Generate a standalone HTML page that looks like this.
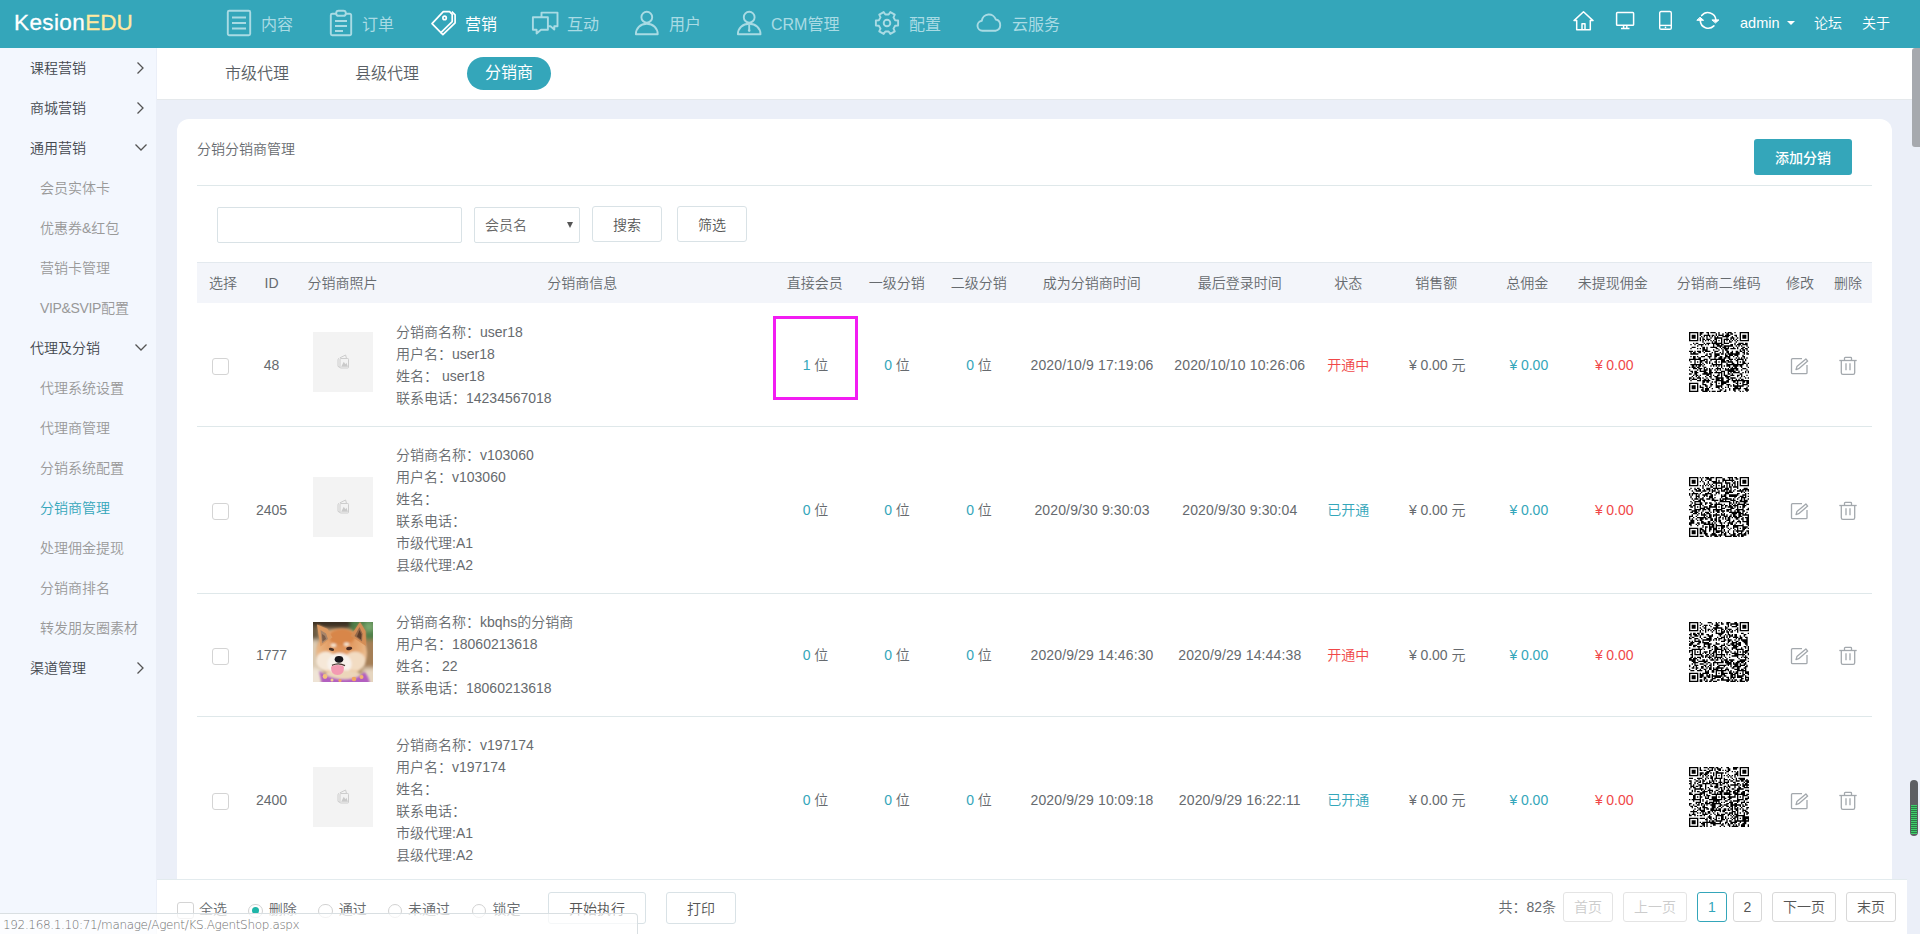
<!DOCTYPE html>
<html lang="zh-CN">
<head>
<meta charset="utf-8">
<title>KesionEDU</title>
<style>
*{box-sizing:border-box;margin:0;padding:0}
html,body{width:1920px;height:934px;overflow:hidden}
body{position:relative;background:#ebeff8;font-family:"Liberation Sans","Noto Sans CJK SC",sans-serif;font-size:14px;color:#666a6e;font-weight:350}
.abs{position:absolute}
/* header */
#hd{position:absolute;left:0;top:0;width:1920px;height:48px;background:#34a6ba}
#logo{position:absolute;left:14px;top:7.500px;font-size:22.500px;line-height:30px;color:#fff;letter-spacing:.4px;-webkit-text-stroke:.3px currentColor}
#logo b{font-weight:normal;color:#ffe9a0;letter-spacing:0}
.nav{position:absolute;top:0;height:48px;line-height:49px;font-size:16px;font-weight:400;color:#a9dbe4;white-space:nowrap}
.nav.on{color:#fff}
.nav svg{position:absolute;top:0;left:0;overflow:visible}
.nav span{position:absolute;top:0}
.tr{position:absolute;top:0;height:48px;line-height:46px;font-size:14px;color:#fff;white-space:nowrap}
/* sidebar */
#sb{position:absolute;left:0;top:48px;width:156px;height:886px;background:#f3f7fe}
.m1{position:absolute;left:30px;font-size:14px;line-height:20px;color:#43484e;white-space:nowrap}
.m2{position:absolute;left:40px;font-size:14px;line-height:20px;color:#999;white-space:nowrap}
.m2.on{color:#34a6ba}
.arr{position:absolute;left:133px;width:14px;height:14px}
/* tabs */
#tabs{position:absolute;left:157px;top:48px;width:1763px;height:52px;background:#fff;border-bottom:1px solid #e5e9ec}
.tab{position:absolute;top:15px;font-size:16px;line-height:22px;color:#5a5f65;white-space:nowrap}
#tabon{position:absolute;left:310px;top:9px;width:84px;height:33px;border-radius:17px;background:#34a6ba;color:#fff;font-size:16px;line-height:32px;text-align:center;font-weight:400}
/* card */
#card{position:absolute;left:177px;top:119px;width:1715px;height:820px;background:#fff;border-radius:12px 12px 0 0}
#ttl{position:absolute;left:20px;top:20px;font-size:14px;line-height:20px;color:#666a6e}
#addbtn{position:absolute;left:1577px;top:20px;width:98px;height:36px;border-radius:3px;background:#34a6ba;color:#fff;font-size:14px;line-height:38px;text-align:center;font-weight:500}
.hl{position:absolute;left:20px;width:1675px;height:1px;background:#dfe8ea}
.inp{position:absolute;border:1px solid #d9e2e6;background:#fff;border-radius:2px}
.btn{position:absolute;border:1px solid #d9e2e6;background:#fff;border-radius:3px;color:#555;font-size:14px;text-align:center;white-space:nowrap}
#th{position:absolute;left:20px;top:143px;width:1675px;height:41px;background:#f3f5fa;border-top:1px solid #e3e9ee}
.c{position:absolute;transform:translate(-50%,-50%);white-space:nowrap;font-size:14px;line-height:20px;color:#666a6e}
.c i{font-style:normal;color:#34a6ba}
.dt{letter-spacing:.13px}
.y{margin-right:3.5px}
.teal{color:#34a6ba}.red{color:#f04848}
.info{position:absolute;left:219px;font-size:14px;line-height:22px;color:#666a6e;white-space:nowrap}
.cb{position:absolute;width:17px;height:17px;border:1px solid #d4d4d4;border-radius:3px;background:#fff}
.ph{position:absolute;left:136px;width:60px;height:60px;background:#f3f3f3}
.qr{position:absolute;left:1512px;width:60px;height:60px}
.ic{position:absolute;width:22px;height:22px}
/* bottom */
#bot{position:absolute;left:157px;top:879px;width:1750px;height:55px;background:#fff;border-top:1px solid #e3ebee}
.rd{position:absolute;width:14.500px;height:14.500px;border:1px solid #d2d2d2;border-radius:50%;background:#fff}
.lb{position:absolute;font-size:14px;line-height:20px;color:#666a6e;white-space:nowrap}
#status{position:absolute;left:0;top:913px;width:638px;height:22px;background:rgba(255,255,255,.72);border-top:1px solid #d9dfe2;border-right:1px solid #d9dfe2;border-top-right-radius:4px;font-size:12px;line-height:23px;color:#707070;padding-left:3px;font-family:"DejaVu Sans","Liberation Sans",sans-serif;letter-spacing:-.34px}
</style>
</head>
<body>
<div id="hd">
<div id="logo">Kesion<b>EDU</b></div>
<div class="nav" style="left:227px"><svg width="24" height="48" viewBox="0 0 24 48" fill="none" stroke="currentColor" stroke-width="1.9"><rect x="0.8" y="10.8" width="22.4" height="24.4" rx="1.5"/><path d="M5 17.5h14M5 23h14M5 28.5h14"/></svg><span style="left:34px">内容</span></div>
<div class="nav" style="left:330px"><svg width="22" height="48" viewBox="0 0 22 48" fill="none" stroke="currentColor" stroke-width="1.9"><path d="M6 13.8H2.3a1.5 1.5 0 0 0-1.5 1.5v18.4a1.5 1.5 0 0 0 1.5 1.5h17.4a1.5 1.5 0 0 0 1.5-1.5V15.3a1.5 1.5 0 0 0-1.5-1.5H16"/><rect x="6.2" y="10.8" width="9.6" height="5" rx="2.4"/><path d="M5 21h12M5 26h12M5 31h8"/></svg><span style="left:32px">订单</span></div>
<div class="nav on" style="left:431px"><svg width="26" height="48" viewBox="0 0 26 48" fill="none" stroke="currentColor" stroke-width="1.700" stroke-linejoin="round"><path d="M1 23.700L12.300 11.600H18.600l2.600 2.800v7.200L9.900 32.700z"/><circle cx="13.600" cy="17.900" r="1.700"/><path d="M20.800 11.600l3.300 3.300v8L11.900 34.700 9.900 32.700"/></svg><span style="left:34px">营销</span></div>
<div class="nav" style="left:532px"><svg width="26" height="48" viewBox="0 0 26 48" fill="none" stroke="currentColor" stroke-width="1.9" stroke-linejoin="round"><path d="M9.500 17V12.600h16v13.600h-3.200v3.400l-3.800-3.400H16"/><path d="M.9 17.200h15v12.600H9l-4.400 3.700v-3.700H.9z"/></svg><span style="left:35px">互动</span></div>
<div class="nav" style="left:635px"><svg width="24" height="48" viewBox="0 0 24 48" fill="none" stroke="currentColor" stroke-width="1.9" stroke-linejoin="round"><circle cx="11.8" cy="17.2" r="5.4"/><path d="M.9 34.2c0-6 4.5-10.4 10.9-10.4s10.900 4.400 10.900 10.400z"/></svg><span style="left:34px">用户</span></div>
<div class="nav" style="left:737px"><svg width="25" height="48" viewBox="0 0 25 48" fill="none" stroke="currentColor" stroke-width="1.9" stroke-linejoin="round"><circle cx="12.2" cy="17.2" r="5.4"/><path d="M.9 34.200c0-6 4.700-10.400 11.300-10.400s11.300 4.400 11.300 10.400z"/><path d="M12.200 24.500v5.500"/><circle cx="12.200" cy="30.600" r="1.300" fill="currentColor" stroke="none"/></svg><span style="left:34px">CRM管理</span></div>
<div class="nav" style="left:875px"><svg width="24" height="48" viewBox="0 0 24 48" fill="none" stroke="currentColor" stroke-width="1.9" stroke-linejoin="round"><path d="M20.13 20.20L23.11 20.44L23.11 25.56L20.13 25.80L18.49 28.64L19.77 31.34L15.33 33.90L13.64 31.44L10.36 31.44L8.67 33.90L4.23 31.34L5.51 28.64L3.87 25.80L0.89 25.56L0.89 20.44L3.87 20.20L5.51 17.36L4.23 14.66L8.67 12.10L10.36 14.56L13.64 14.56L15.33 12.10L19.77 14.66L18.49 17.36z"/><circle cx="12" cy="23" r="3.3"/></svg><span style="left:34px">配置</span></div>
<div class="nav" style="left:976px"><svg width="26" height="48" viewBox="0 0 26 48" fill="none" stroke="currentColor" stroke-width="1.9" stroke-linejoin="round"><path d="M6.400 30.700a5 5 0 0 1-.6-9.950 7.200 7.200 0 0 1 14-1.200A5.700 5.700 0 0 1 19.600 30.700z"/></svg><span style="left:36px">云服务</span></div>

<svg class="abs" style="left:1573px;top:10px" width="21" height="22" viewBox="0 0 21 22" fill="none" stroke="#fff" stroke-width="1.5" stroke-linejoin="round"><path d="M1 10.600L10.500 1.800 20 10.600h-2.700v9.200h-13.600v-9.200z"/><path d="M9 19.800v-6h3v6"/></svg>
<svg class="abs" style="left:1615px;top:11px" width="20" height="19" viewBox="0 0 20 19" fill="none" stroke="#fff" stroke-width="1.5" stroke-linejoin="round"><rect x="1.600" y="1.600" width="17" height="12.600" rx=".8"/><path d="M6 17.400h8.500M8.600 14.200v3M11.800 14.200v3"/></svg>
<svg class="abs" style="left:1658px;top:10px" width="15" height="21" viewBox="0 0 15 21" fill="none" stroke="#fff" stroke-width="1.400" stroke-linejoin="round"><rect x="1.700" y="1.500" width="11.600" height="17.800" rx="1.400"/><path d="M1.700 15.400h11.600"/><circle cx="7.500" cy="17.400" r=".8" fill="#fff" stroke="none"/></svg>
<svg class="abs" style="left:1696px;top:10px" width="24" height="22" viewBox="0 0 24 22" fill="none" stroke="#fff" stroke-width="1.600" stroke-linecap="round" stroke-linejoin="round"><path d="M5.700 5.600A8 8 0 0 1 19.900 10"/><path d="M16.300 9.900h6.600l-3.200 2.800z" fill="#fff" stroke-width="1"/><path d="M17.900 15.900A8 8 0 0 1 4.300 10.600"/><path d="M1.200 10.300h6.400L4.300 7.500z" fill="#fff" stroke-width="1"/></svg>
<div class="tr" style="left:1740px;font-size:14.500px">admin</div>
<div class="abs" style="left:1787px;top:21px;width:0;height:0;border-left:4px solid transparent;border-right:4px solid transparent;border-top:4.500px solid #fff"></div>
<div class="tr" style="left:1814px">论坛</div>
<div class="tr" style="left:1862px">关于</div>
</div>

<div id="sb">
<div class="m1" style="top:10px">课程营销</div>
<svg class="arr" style="top:13px" viewBox="0 0 14 14" fill="none" stroke="#555" stroke-width="1.3"><path d="M4.500 1.500L10 7l-5.500 5.500"/></svg>
<div class="m1" style="top:50px">商城营销</div>
<svg class="arr" style="top:53px" viewBox="0 0 14 14" fill="none" stroke="#555" stroke-width="1.3"><path d="M4.500 1.500L10 7l-5.500 5.500"/></svg>
<div class="m1" style="top:90px">通用营销</div>
<svg class="arr" style="top:92px;left:134px" viewBox="0 0 14 14" fill="none" stroke="#555" stroke-width="1.3"><path d="M1.500 4.500L7 10l5.500-5.500"/></svg>
<div class="m2" style="top:130px">会员实体卡</div>
<div class="m2" style="top:170px">优惠券&amp;红包</div>
<div class="m2" style="top:210px">营销卡管理</div>
<div class="m2" style="top:250px"><span style="letter-spacing:-.35px">VIP&amp;SVIP</span>配置</div>
<div class="m1" style="top:290px">代理及分销</div>
<svg class="arr" style="top:292px;left:134px" viewBox="0 0 14 14" fill="none" stroke="#555" stroke-width="1.3"><path d="M1.500 4.500L7 10l5.500-5.500"/></svg>
<div class="m2" style="top:330px">代理系统设置</div>
<div class="m2" style="top:370px">代理商管理</div>
<div class="m2" style="top:410px">分销系统配置</div>
<div class="m2 on" style="top:450px">分销商管理</div>
<div class="m2" style="top:490px">处理佣金提现</div>
<div class="m2" style="top:530px">分销商排名</div>
<div class="m2" style="top:570px">转发朋友圈素材</div>
<div class="m1" style="top:610px">渠道管理</div>
<svg class="arr" style="top:613px" viewBox="0 0 14 14" fill="none" stroke="#555" stroke-width="1.3"><path d="M4.500 1.500L10 7l-5.500 5.500"/></svg>
</div>
<div id="tabs">
<div class="tab" style="left:68px">市级代理</div>
<div class="tab" style="left:198px">县级代理</div>
<div id="tabon">分销商</div>
</div>
<div class="abs" style="left:1912px;top:48px;width:8px;height:99px;background:#a6a9ae;border-radius:3px 0 0 3px"></div>
<div id="card">
<div id="ttl">分销分销商管理</div>
<div id="addbtn">添加分销</div>
<div class="hl" style="top:66px"></div>
<div class="inp" style="left:40px;top:88px;width:245px;height:36px"></div>
<div class="inp" style="left:297px;top:88px;width:106px;height:36px;font-size:14px;line-height:34px;padding-left:10px;color:#666">会员名<span style="position:absolute;left:92px;top:14px;width:0;height:0;border-left:3.5px solid transparent;border-right:3.5px solid transparent;border-top:6px solid #555"></span></div>
<div class="btn" style="left:415px;top:87px;width:70px;height:36px;line-height:36px">搜索</div>
<div class="btn" style="left:500px;top:87px;width:70px;height:36px;line-height:36px">筛选</div>
<div id="th"></div>
<div class="c" style="left:46px;top:164px">选择</div>
<div class="c" style="left:94.5px;top:164px">ID</div>
<div class="c" style="left:165.5px;top:164px">分销商照片</div>
<div class="c" style="left:405.29999999999995px;top:164px">分销商信息</div>
<div class="c" style="left:637.7px;top:164px">直接会员</div>
<div class="c" style="left:719.8px;top:164px">一级分销</div>
<div class="c" style="left:801.8px;top:164px">二级分销</div>
<div class="c" style="left:914.7px;top:164px">成为分销商时间</div>
<div class="c" style="left:1062.7px;top:164px">最后登录时间</div>
<div class="c" style="left:1171.3px;top:164px">状态</div>
<div class="c" style="left:1259.2px;top:164px">销售额</div>
<div class="c" style="left:1350.3px;top:164px">总佣金</div>
<div class="c" style="left:1435.8px;top:164px">未提现佣金</div>
<div class="c" style="left:1541.7px;top:164px">分销商二维码</div>
<div class="c" style="left:1623px;top:164px">修改</div>
<div class="c" style="left:1671px;top:164px">删除</div>
<div class="hl" style="top:307px"></div>
<div class="cb" style="left:35px;top:239px"></div>
<div class="c" style="left:94.5px;top:246px">48</div>
<div class="ph" style="top:213px"><svg style="position:absolute;left:24px;top:22px" width="13" height="15" viewBox="0 0 13 15" fill="none" stroke="#cdcdcd" stroke-width="1"><path d="M3 3.8L8.600 1l.8 3"/><path d="M2.200 4.200L1 5.200v7.200l2 1"/><rect x="3" y="4.500" width="8.500" height="9.500" rx=".8"/><path d="M4.200 12.800l2.600-5 1.500 2.400 1.100-1.400 1.600 4z" fill="#cacaca" stroke="none"/></svg></div>
<div class="info" style="top:202px">分销商名称：user18<br>用户名：user18<br>姓名： user18<br>联系电话：14234567018</div>
<div class="c" style="left:638.5px;top:246px"><i>1</i> 位</div>
<div class="c" style="left:720px;top:246px"><i>0</i> 位</div>
<div class="c" style="left:802px;top:246px"><i>0</i> 位</div>
<div class="c dt" style="left:915px;top:246px">2020/10/9 17:19:06</div>
<div class="c dt" style="left:1062.8px;top:246px">2020/10/10 10:26:06</div>
<div class="c red" style="left:1171.3px;top:246px">开通中</div>
<div class="c" style="left:1260.3px;top:246px"><span class="y">¥</span>0.00 元</div>
<div class="c teal" style="left:1351.9px;top:246px"><span class="y">¥</span>0.00</div>
<div class="c red" style="left:1437.2px;top:246px"><span class="y">¥</span>0.00</div>
<svg class="qr" style="top:213px" viewBox="0 0 45 45" shape-rendering="auto"><rect width="45" height="45" fill="#fff"/><path fill="#000" d="M0 0h7v1h-7zM8 0h3v1h-3zM13 0h2v1h-2zM16 0h4v1h-4zM22 0h1v1h-1zM27 0h1v1h-1zM29 0h3v1h-3zM34 0h1v1h-1zM38 0h7v1h-7zM0 1h1v1h-1zM6 1h1v1h-1zM8 1h2v1h-2zM14 1h1v1h-1zM20 1h1v1h-1zM22 1h1v1h-1zM25 1h1v1h-1zM28 1h2v1h-2zM31 1h2v1h-2zM38 1h1v1h-1zM44 1h1v1h-1zM0 2h1v1h-1zM2 2h3v1h-3zM6 2h1v1h-1zM8 2h1v1h-1zM11 2h5v1h-5zM17 2h2v1h-2zM20 2h1v1h-1zM22 2h4v1h-4zM27 2h4v1h-4zM34 2h2v1h-2zM38 2h1v1h-1zM40 2h3v1h-3zM44 2h1v1h-1zM0 3h1v1h-1zM2 3h3v1h-3zM6 3h1v1h-1zM9 3h1v1h-1zM11 3h1v1h-1zM13 3h1v1h-1zM15 3h1v1h-1zM17 3h1v1h-1zM19 3h1v1h-1zM21 3h1v1h-1zM25 3h5v1h-5zM32 3h1v1h-1zM35 3h1v1h-1zM38 3h1v1h-1zM40 3h3v1h-3zM44 3h1v1h-1zM0 4h1v1h-1zM2 4h3v1h-3zM6 4h1v1h-1zM8 4h1v1h-1zM10 4h1v1h-1zM13 4h1v1h-1zM16 4h1v1h-1zM19 4h6v1h-6zM28 4h1v1h-1zM31 4h3v1h-3zM36 4h1v1h-1zM38 4h1v1h-1zM40 4h3v1h-3zM44 4h1v1h-1zM0 5h1v1h-1zM6 5h1v1h-1zM8 5h1v1h-1zM10 5h2v1h-2zM13 5h3v1h-3zM19 5h2v1h-2zM24 5h1v1h-1zM26 5h4v1h-4zM31 5h1v1h-1zM33 5h1v1h-1zM35 5h1v1h-1zM38 5h1v1h-1zM44 5h1v1h-1zM0 6h7v1h-7zM8 6h1v1h-1zM10 6h1v1h-1zM12 6h1v1h-1zM14 6h1v1h-1zM16 6h1v1h-1zM18 6h1v1h-1zM20 6h1v1h-1zM22 6h1v1h-1zM24 6h1v1h-1zM26 6h1v1h-1zM28 6h1v1h-1zM30 6h1v1h-1zM32 6h1v1h-1zM34 6h1v1h-1zM36 6h1v1h-1zM38 6h7v1h-7zM10 7h1v1h-1zM17 7h1v1h-1zM19 7h2v1h-2zM24 7h1v1h-1zM26 7h1v1h-1zM30 7h2v1h-2zM35 7h1v1h-1zM3 8h1v1h-1zM5 8h2v1h-2zM11 8h1v1h-1zM13 8h3v1h-3zM17 8h8v1h-8zM26 8h4v1h-4zM34 8h1v1h-1zM37 8h4v1h-4zM42 8h2v1h-2zM1 9h1v1h-1zM4 9h1v1h-1zM7 9h4v1h-4zM12 9h1v1h-1zM14 9h1v1h-1zM18 9h1v1h-1zM20 9h3v1h-3zM24 9h2v1h-2zM31 9h2v1h-2zM34 9h1v1h-1zM36 9h3v1h-3zM40 9h4v1h-4zM6 10h1v1h-1zM9 10h1v1h-1zM18 10h1v1h-1zM21 10h4v1h-4zM26 10h7v1h-7zM35 10h1v1h-1zM37 10h1v1h-1zM39 10h1v1h-1zM43 10h1v1h-1zM2 11h3v1h-3zM10 11h2v1h-2zM13 11h1v1h-1zM16 11h5v1h-5zM23 11h1v1h-1zM25 11h3v1h-3zM29 11h1v1h-1zM33 11h1v1h-1zM36 11h1v1h-1zM40 11h2v1h-2zM44 11h1v1h-1zM1 12h1v1h-1zM6 12h1v1h-1zM8 12h1v1h-1zM10 12h2v1h-2zM13 12h1v1h-1zM20 12h2v1h-2zM24 12h1v1h-1zM26 12h4v1h-4zM31 12h4v1h-4zM36 12h1v1h-1zM39 12h2v1h-2zM42 12h2v1h-2zM10 13h4v1h-4zM18 13h1v1h-1zM22 13h1v1h-1zM25 13h1v1h-1zM27 13h2v1h-2zM38 13h1v1h-1zM40 13h2v1h-2zM43 13h1v1h-1zM0 14h3v1h-3zM4 14h1v1h-1zM6 14h3v1h-3zM10 14h1v1h-1zM12 14h4v1h-4zM19 14h3v1h-3zM25 14h1v1h-1zM28 14h2v1h-2zM32 14h1v1h-1zM35 14h2v1h-2zM38 14h2v1h-2zM41 14h1v1h-1zM44 14h1v1h-1zM1 15h1v1h-1zM3 15h2v1h-2zM7 15h2v1h-2zM11 15h1v1h-1zM17 15h1v1h-1zM19 15h1v1h-1zM23 15h1v1h-1zM25 15h1v1h-1zM28 15h2v1h-2zM31 15h2v1h-2zM35 15h3v1h-3zM40 15h2v1h-2zM43 15h1v1h-1zM1 16h6v1h-6zM13 16h1v1h-1zM15 16h2v1h-2zM19 16h4v1h-4zM24 16h2v1h-2zM27 16h1v1h-1zM29 16h9v1h-9zM41 16h1v1h-1zM43 16h2v1h-2zM12 17h2v1h-2zM16 17h1v1h-1zM19 17h4v1h-4zM27 17h2v1h-2zM30 17h3v1h-3zM34 17h3v1h-3zM40 17h1v1h-1zM1 18h1v1h-1zM3 18h2v1h-2zM6 18h1v1h-1zM9 18h3v1h-3zM14 18h3v1h-3zM19 18h2v1h-2zM23 18h2v1h-2zM27 18h4v1h-4zM33 18h1v1h-1zM36 18h1v1h-1zM40 18h2v1h-2zM3 19h2v1h-2zM7 19h2v1h-2zM15 19h1v1h-1zM19 19h1v1h-1zM22 19h3v1h-3zM26 19h2v1h-2zM29 19h2v1h-2zM35 19h1v1h-1zM37 19h1v1h-1zM39 19h1v1h-1zM41 19h1v1h-1zM43 19h1v1h-1zM0 20h9v1h-9zM11 20h3v1h-3zM16 20h11v1h-11zM30 20h3v1h-3zM34 20h1v1h-1zM36 20h5v1h-5zM42 20h1v1h-1zM0 21h1v1h-1zM4 21h1v1h-1zM8 21h4v1h-4zM13 21h1v1h-1zM16 21h1v1h-1zM20 21h1v1h-1zM24 21h3v1h-3zM28 21h2v1h-2zM31 21h1v1h-1zM35 21h2v1h-2zM40 21h1v1h-1zM42 21h1v1h-1zM1 22h1v1h-1zM4 22h1v1h-1zM6 22h1v1h-1zM8 22h2v1h-2zM12 22h2v1h-2zM15 22h1v1h-1zM19 22h2v1h-2zM22 22h1v1h-1zM24 22h4v1h-4zM29 22h4v1h-4zM36 22h1v1h-1zM38 22h1v1h-1zM40 22h2v1h-2zM4 23h1v1h-1zM8 23h1v1h-1zM10 23h1v1h-1zM13 23h1v1h-1zM15 23h1v1h-1zM17 23h1v1h-1zM20 23h1v1h-1zM24 23h1v1h-1zM28 23h1v1h-1zM32 23h2v1h-2zM36 23h1v1h-1zM40 23h3v1h-3zM44 23h1v1h-1zM1 24h9v1h-9zM11 24h1v1h-1zM17 24h8v1h-8zM28 24h13v1h-13zM43 24h1v1h-1zM2 25h2v1h-2zM5 25h1v1h-1zM7 25h2v1h-2zM10 25h1v1h-1zM16 25h1v1h-1zM18 25h1v1h-1zM20 25h1v1h-1zM22 25h1v1h-1zM24 25h1v1h-1zM26 25h1v1h-1zM28 25h3v1h-3zM33 25h4v1h-4zM38 25h2v1h-2zM43 25h1v1h-1zM0 26h1v1h-1zM2 26h3v1h-3zM6 26h2v1h-2zM11 26h2v1h-2zM21 26h1v1h-1zM24 26h1v1h-1zM30 26h1v1h-1zM32 26h1v1h-1zM34 26h2v1h-2zM39 26h1v1h-1zM44 26h1v1h-1zM3 27h3v1h-3zM7 27h3v1h-3zM11 27h1v1h-1zM13 27h1v1h-1zM15 27h1v1h-1zM17 27h1v1h-1zM20 27h4v1h-4zM25 27h1v1h-1zM27 27h1v1h-1zM29 27h1v1h-1zM31 27h6v1h-6zM40 27h3v1h-3zM0 28h1v1h-1zM6 28h1v1h-1zM8 28h1v1h-1zM11 28h3v1h-3zM15 28h2v1h-2zM19 28h1v1h-1zM21 28h1v1h-1zM23 28h1v1h-1zM27 28h7v1h-7zM35 28h2v1h-2zM39 28h1v1h-1zM43 28h1v1h-1zM1 29h2v1h-2zM4 29h2v1h-2zM8 29h5v1h-5zM15 29h2v1h-2zM20 29h1v1h-1zM24 29h3v1h-3zM29 29h6v1h-6zM37 29h1v1h-1zM42 29h1v1h-1zM44 29h1v1h-1zM2 30h1v1h-1zM4 30h3v1h-3zM11 30h3v1h-3zM15 30h3v1h-3zM19 30h6v1h-6zM26 30h1v1h-1zM29 30h1v1h-1zM31 30h1v1h-1zM33 30h5v1h-5zM40 30h1v1h-1zM42 30h1v1h-1zM44 30h1v1h-1zM0 31h2v1h-2zM4 31h2v1h-2zM10 31h7v1h-7zM22 31h1v1h-1zM24 31h1v1h-1zM26 31h1v1h-1zM29 31h2v1h-2zM32 31h1v1h-1zM38 31h2v1h-2zM3 32h1v1h-1zM5 32h2v1h-2zM8 32h1v1h-1zM13 32h2v1h-2zM16 32h1v1h-1zM18 32h1v1h-1zM21 32h2v1h-2zM24 32h1v1h-1zM26 32h3v1h-3zM31 32h3v1h-3zM36 32h2v1h-2zM39 32h1v1h-1zM43 32h1v1h-1zM2 33h1v1h-1zM5 33h1v1h-1zM7 33h1v1h-1zM12 33h1v1h-1zM15 33h2v1h-2zM19 33h3v1h-3zM24 33h1v1h-1zM27 33h4v1h-4zM36 33h1v1h-1zM39 33h1v1h-1zM41 33h1v1h-1zM0 34h2v1h-2zM3 34h1v1h-1zM6 34h3v1h-3zM10 34h1v1h-1zM13 34h1v1h-1zM16 34h1v1h-1zM20 34h6v1h-6zM28 34h2v1h-2zM31 34h4v1h-4zM38 34h1v1h-1zM42 34h1v1h-1zM44 34h1v1h-1zM0 35h1v1h-1zM2 35h4v1h-4zM8 35h1v1h-1zM11 35h2v1h-2zM14 35h1v1h-1zM17 35h2v1h-2zM20 35h3v1h-3zM24 35h2v1h-2zM29 35h2v1h-2zM32 35h1v1h-1zM35 35h1v1h-1zM37 35h1v1h-1zM39 35h2v1h-2zM1 36h1v1h-1zM6 36h3v1h-3zM10 36h6v1h-6zM20 36h6v1h-6zM28 36h2v1h-2zM32 36h13v1h-13zM10 37h2v1h-2zM13 37h2v1h-2zM17 37h1v1h-1zM19 37h2v1h-2zM24 37h6v1h-6zM33 37h2v1h-2zM36 37h1v1h-1zM40 37h2v1h-2zM43 37h2v1h-2zM0 38h7v1h-7zM10 38h1v1h-1zM16 38h1v1h-1zM20 38h1v1h-1zM22 38h1v1h-1zM24 38h4v1h-4zM35 38h2v1h-2zM38 38h1v1h-1zM40 38h1v1h-1zM43 38h2v1h-2zM0 39h1v1h-1zM6 39h1v1h-1zM10 39h3v1h-3zM16 39h2v1h-2zM20 39h1v1h-1zM24 39h2v1h-2zM28 39h3v1h-3zM33 39h1v1h-1zM36 39h1v1h-1zM40 39h4v1h-4zM0 40h1v1h-1zM2 40h3v1h-3zM6 40h1v1h-1zM8 40h1v1h-1zM12 40h2v1h-2zM16 40h1v1h-1zM20 40h5v1h-5zM29 40h1v1h-1zM31 40h1v1h-1zM33 40h8v1h-8zM44 40h1v1h-1zM0 41h1v1h-1zM2 41h3v1h-3zM6 41h1v1h-1zM8 41h3v1h-3zM13 41h1v1h-1zM15 41h1v1h-1zM20 41h3v1h-3zM24 41h1v1h-1zM27 41h1v1h-1zM29 41h1v1h-1zM34 41h3v1h-3zM38 41h1v1h-1zM43 41h1v1h-1zM0 42h1v1h-1zM2 42h3v1h-3zM6 42h1v1h-1zM10 42h1v1h-1zM12 42h3v1h-3zM17 42h1v1h-1zM22 42h1v1h-1zM25 42h1v1h-1zM30 42h1v1h-1zM33 42h6v1h-6zM41 42h3v1h-3zM0 43h1v1h-1zM6 43h1v1h-1zM9 43h2v1h-2zM12 43h3v1h-3zM23 43h2v1h-2zM27 43h1v1h-1zM30 43h1v1h-1zM33 43h2v1h-2zM37 43h1v1h-1zM42 43h3v1h-3zM0 44h7v1h-7zM10 44h4v1h-4zM15 44h1v1h-1zM17 44h3v1h-3zM21 44h3v1h-3zM26 44h2v1h-2zM34 44h1v1h-1zM38 44h1v1h-1zM40 44h1v1h-1zM43 44h1v1h-1z"/></svg>
<svg class="ic" style="left:1611px;top:236px" viewBox="0 0 22 22" fill="none" stroke="#a3a8ad" stroke-width="1.300" stroke-linejoin="round"><path d="M14 3.700H4.500a1 1 0 0 0-1 1v13a1 1 0 0 0 1 1h13.500a1 1 0 0 0 1-1V10"/><path d="M8 14.600l.9-3 9-7.600 1.800 2.100-9 7.600z" /></svg>
<svg class="ic" style="left:1660px;top:236px" viewBox="0 0 22 22" fill="none" stroke="#a3a8ad" stroke-width="1.300" stroke-linejoin="round"><path d="M2.300 5.500h17.400"/><path d="M7.500 5.300V3.200a.8.800 0 0 1 .8-.8h5.400a.8.800 0 0 1 .8.800v2.100"/><path d="M4.300 5.700v12a1.600 1.600 0 0 0 1.600 1.600h10.200a1.600 1.600 0 0 0 1.600-1.600v-12"/><path d="M9 8.300v7M13 8.300v7"/></svg>
<div class="hl" style="top:474px"></div>
<div class="cb" style="left:35px;top:384px"></div>
<div class="c" style="left:94.5px;top:391px">2405</div>
<div class="ph" style="top:358px"><svg style="position:absolute;left:24px;top:22px" width="13" height="15" viewBox="0 0 13 15" fill="none" stroke="#cdcdcd" stroke-width="1"><path d="M3 3.8L8.600 1l.8 3"/><path d="M2.200 4.200L1 5.200v7.200l2 1"/><rect x="3" y="4.500" width="8.500" height="9.500" rx=".8"/><path d="M4.200 12.800l2.600-5 1.500 2.400 1.100-1.400 1.600 4z" fill="#cacaca" stroke="none"/></svg></div>
<div class="info" style="top:325px">分销商名称：v103060<br>用户名：v103060<br>姓名：<br>联系电话：<br>市级代理:A1<br>县级代理:A2</div>
<div class="c" style="left:638.5px;top:391px"><i>0</i> 位</div>
<div class="c" style="left:720px;top:391px"><i>0</i> 位</div>
<div class="c" style="left:802px;top:391px"><i>0</i> 位</div>
<div class="c dt" style="left:915px;top:391px">2020/9/30 9:30:03</div>
<div class="c dt" style="left:1062.8px;top:391px">2020/9/30 9:30:04</div>
<div class="c teal" style="left:1171.3px;top:391px">已开通</div>
<div class="c" style="left:1260.3px;top:391px"><span class="y">¥</span>0.00 元</div>
<div class="c teal" style="left:1351.9px;top:391px"><span class="y">¥</span>0.00</div>
<div class="c red" style="left:1437.2px;top:391px"><span class="y">¥</span>0.00</div>
<svg class="qr" style="top:358px" viewBox="0 0 45 45" shape-rendering="auto"><rect width="45" height="45" fill="#fff"/><path fill="#000" d="M0 0h7v1h-7zM8 0h1v1h-1zM10 0h1v1h-1zM12 0h3v1h-3zM16 0h3v1h-3zM20 0h5v1h-5zM29 0h4v1h-4zM34 0h2v1h-2zM38 0h7v1h-7zM0 1h1v1h-1zM6 1h1v1h-1zM9 1h1v1h-1zM13 1h4v1h-4zM20 1h1v1h-1zM25 1h2v1h-2zM30 1h1v1h-1zM32 1h1v1h-1zM35 1h2v1h-2zM38 1h1v1h-1zM44 1h1v1h-1zM0 2h1v1h-1zM2 2h3v1h-3zM6 2h1v1h-1zM9 2h1v1h-1zM12 2h1v1h-1zM15 2h2v1h-2zM20 2h1v1h-1zM22 2h1v1h-1zM25 2h9v1h-9zM38 2h1v1h-1zM40 2h3v1h-3zM44 2h1v1h-1zM0 3h1v1h-1zM2 3h3v1h-3zM6 3h1v1h-1zM8 3h1v1h-1zM10 3h1v1h-1zM14 3h1v1h-1zM17 3h4v1h-4zM22 3h1v1h-1zM25 3h1v1h-1zM27 3h1v1h-1zM32 3h1v1h-1zM34 3h1v1h-1zM36 3h1v1h-1zM38 3h1v1h-1zM40 3h3v1h-3zM44 3h1v1h-1zM0 4h1v1h-1zM2 4h3v1h-3zM6 4h1v1h-1zM11 4h1v1h-1zM14 4h1v1h-1zM18 4h7v1h-7zM27 4h4v1h-4zM33 4h2v1h-2zM36 4h1v1h-1zM38 4h1v1h-1zM40 4h3v1h-3zM44 4h1v1h-1zM0 5h1v1h-1zM6 5h1v1h-1zM11 5h1v1h-1zM13 5h1v1h-1zM15 5h1v1h-1zM17 5h1v1h-1zM20 5h1v1h-1zM24 5h1v1h-1zM28 5h1v1h-1zM30 5h1v1h-1zM32 5h1v1h-1zM34 5h1v1h-1zM36 5h1v1h-1zM38 5h1v1h-1zM44 5h1v1h-1zM0 6h7v1h-7zM8 6h1v1h-1zM10 6h1v1h-1zM12 6h1v1h-1zM14 6h1v1h-1zM16 6h1v1h-1zM18 6h1v1h-1zM20 6h1v1h-1zM22 6h1v1h-1zM24 6h1v1h-1zM26 6h1v1h-1zM28 6h1v1h-1zM30 6h1v1h-1zM32 6h1v1h-1zM34 6h1v1h-1zM36 6h1v1h-1zM38 6h7v1h-7zM10 7h1v1h-1zM16 7h2v1h-2zM20 7h1v1h-1zM24 7h3v1h-3zM28 7h1v1h-1zM30 7h2v1h-2zM33 7h4v1h-4zM1 8h1v1h-1zM4 8h1v1h-1zM6 8h2v1h-2zM10 8h1v1h-1zM13 8h3v1h-3zM18 8h7v1h-7zM27 8h3v1h-3zM31 8h1v1h-1zM36 8h1v1h-1zM41 8h3v1h-3zM0 9h1v1h-1zM4 9h2v1h-2zM7 9h2v1h-2zM11 9h1v1h-1zM13 9h3v1h-3zM17 9h1v1h-1zM19 9h1v1h-1zM21 9h1v1h-1zM24 9h1v1h-1zM26 9h4v1h-4zM31 9h1v1h-1zM34 9h1v1h-1zM38 9h1v1h-1zM40 9h5v1h-5zM2 10h1v1h-1zM5 10h4v1h-4zM10 10h3v1h-3zM15 10h1v1h-1zM17 10h3v1h-3zM22 10h1v1h-1zM24 10h3v1h-3zM28 10h1v1h-1zM30 10h2v1h-2zM33 10h1v1h-1zM36 10h5v1h-5zM42 10h1v1h-1zM44 10h1v1h-1zM3 11h1v1h-1zM9 11h1v1h-1zM14 11h1v1h-1zM17 11h1v1h-1zM20 11h3v1h-3zM27 11h6v1h-6zM39 11h1v1h-1zM41 11h1v1h-1zM0 12h1v1h-1zM2 12h5v1h-5zM8 12h1v1h-1zM12 12h5v1h-5zM20 12h1v1h-1zM22 12h1v1h-1zM27 12h3v1h-3zM36 12h2v1h-2zM42 12h1v1h-1zM44 12h1v1h-1zM0 13h1v1h-1zM2 13h1v1h-1zM5 13h1v1h-1zM7 13h1v1h-1zM10 13h4v1h-4zM16 13h2v1h-2zM19 13h1v1h-1zM24 13h1v1h-1zM26 13h2v1h-2zM30 13h7v1h-7zM40 13h3v1h-3zM1 14h1v1h-1zM5 14h3v1h-3zM11 14h1v1h-1zM13 14h1v1h-1zM15 14h3v1h-3zM24 14h4v1h-4zM30 14h6v1h-6zM38 14h3v1h-3zM42 14h1v1h-1zM44 14h1v1h-1zM1 15h1v1h-1zM5 15h1v1h-1zM7 15h1v1h-1zM10 15h1v1h-1zM15 15h3v1h-3zM19 15h1v1h-1zM24 15h1v1h-1zM27 15h2v1h-2zM34 15h1v1h-1zM37 15h1v1h-1zM39 15h4v1h-4zM2 16h1v1h-1zM4 16h3v1h-3zM8 16h3v1h-3zM13 16h3v1h-3zM17 16h2v1h-2zM23 16h1v1h-1zM25 16h7v1h-7zM33 16h1v1h-1zM36 16h1v1h-1zM39 16h1v1h-1zM41 16h1v1h-1zM44 16h1v1h-1zM3 17h1v1h-1zM7 17h2v1h-2zM10 17h2v1h-2zM17 17h5v1h-5zM23 17h3v1h-3zM27 17h1v1h-1zM31 17h4v1h-4zM38 17h2v1h-2zM41 17h3v1h-3zM1 18h1v1h-1zM4 18h5v1h-5zM11 18h1v1h-1zM19 18h1v1h-1zM23 18h8v1h-8zM33 18h1v1h-1zM35 18h2v1h-2zM38 18h6v1h-6zM2 19h1v1h-1zM4 19h1v1h-1zM8 19h2v1h-2zM12 19h2v1h-2zM15 19h2v1h-2zM20 19h1v1h-1zM22 19h1v1h-1zM30 19h2v1h-2zM33 19h1v1h-1zM35 19h1v1h-1zM37 19h1v1h-1zM41 19h2v1h-2zM1 20h1v1h-1zM4 20h6v1h-6zM12 20h1v1h-1zM16 20h2v1h-2zM19 20h6v1h-6zM26 20h1v1h-1zM30 20h1v1h-1zM32 20h1v1h-1zM34 20h1v1h-1zM36 20h6v1h-6zM43 20h2v1h-2zM0 21h2v1h-2zM3 21h2v1h-2zM8 21h1v1h-1zM10 21h1v1h-1zM15 21h2v1h-2zM19 21h2v1h-2zM24 21h2v1h-2zM27 21h2v1h-2zM30 21h2v1h-2zM33 21h4v1h-4zM40 21h3v1h-3zM1 22h2v1h-2zM4 22h1v1h-1zM6 22h1v1h-1zM8 22h1v1h-1zM11 22h3v1h-3zM15 22h6v1h-6zM22 22h1v1h-1zM24 22h1v1h-1zM27 22h1v1h-1zM29 22h4v1h-4zM34 22h1v1h-1zM36 22h1v1h-1zM38 22h1v1h-1zM40 22h2v1h-2zM4 23h1v1h-1zM8 23h4v1h-4zM13 23h3v1h-3zM20 23h1v1h-1zM24 23h3v1h-3zM31 23h3v1h-3zM36 23h1v1h-1zM40 23h1v1h-1zM44 23h1v1h-1zM0 24h2v1h-2zM4 24h5v1h-5zM10 24h3v1h-3zM14 24h2v1h-2zM18 24h7v1h-7zM28 24h4v1h-4zM35 24h6v1h-6zM43 24h2v1h-2zM2 25h4v1h-4zM7 25h1v1h-1zM10 25h1v1h-1zM15 25h1v1h-1zM18 25h1v1h-1zM20 25h3v1h-3zM24 25h3v1h-3zM28 25h2v1h-2zM31 25h1v1h-1zM34 25h1v1h-1zM36 25h2v1h-2zM40 25h2v1h-2zM1 26h2v1h-2zM4 26h3v1h-3zM9 26h1v1h-1zM12 26h3v1h-3zM16 26h1v1h-1zM18 26h1v1h-1zM21 26h2v1h-2zM25 26h1v1h-1zM30 26h9v1h-9zM40 26h1v1h-1zM43 26h1v1h-1zM3 27h3v1h-3zM7 27h1v1h-1zM9 27h1v1h-1zM11 27h1v1h-1zM13 27h3v1h-3zM20 27h1v1h-1zM24 27h1v1h-1zM26 27h1v1h-1zM32 27h4v1h-4zM37 27h4v1h-4zM42 27h1v1h-1zM2 28h1v1h-1zM6 28h1v1h-1zM9 28h4v1h-4zM15 28h2v1h-2zM18 28h5v1h-5zM24 28h3v1h-3zM28 28h1v1h-1zM31 28h1v1h-1zM33 28h2v1h-2zM37 28h2v1h-2zM40 28h5v1h-5zM0 29h3v1h-3zM5 29h1v1h-1zM11 29h1v1h-1zM13 29h1v1h-1zM15 29h2v1h-2zM18 29h1v1h-1zM20 29h1v1h-1zM23 29h1v1h-1zM26 29h3v1h-3zM30 29h2v1h-2zM33 29h3v1h-3zM37 29h3v1h-3zM44 29h1v1h-1zM0 30h1v1h-1zM3 30h1v1h-1zM6 30h7v1h-7zM14 30h3v1h-3zM20 30h1v1h-1zM22 30h2v1h-2zM25 30h1v1h-1zM27 30h1v1h-1zM29 30h2v1h-2zM32 30h1v1h-1zM34 30h4v1h-4zM40 30h1v1h-1zM42 30h3v1h-3zM0 31h1v1h-1zM2 31h1v1h-1zM5 31h1v1h-1zM8 31h3v1h-3zM12 31h2v1h-2zM16 31h2v1h-2zM19 31h2v1h-2zM22 31h1v1h-1zM25 31h1v1h-1zM27 31h1v1h-1zM29 31h2v1h-2zM35 31h2v1h-2zM39 31h2v1h-2zM43 31h2v1h-2zM1 32h3v1h-3zM6 32h1v1h-1zM8 32h2v1h-2zM16 32h2v1h-2zM19 32h2v1h-2zM22 32h2v1h-2zM28 32h3v1h-3zM33 32h1v1h-1zM37 32h1v1h-1zM40 32h1v1h-1zM43 32h2v1h-2zM1 33h3v1h-3zM9 33h2v1h-2zM14 33h2v1h-2zM18 33h1v1h-1zM20 33h1v1h-1zM22 33h2v1h-2zM27 33h1v1h-1zM30 33h1v1h-1zM32 33h2v1h-2zM36 33h3v1h-3zM40 33h5v1h-5zM0 34h4v1h-4zM6 34h2v1h-2zM9 34h4v1h-4zM14 34h2v1h-2zM17 34h1v1h-1zM19 34h1v1h-1zM23 34h2v1h-2zM26 34h1v1h-1zM29 34h4v1h-4zM35 34h1v1h-1zM38 34h1v1h-1zM43 34h2v1h-2zM0 35h2v1h-2zM5 35h1v1h-1zM7 35h1v1h-1zM11 35h8v1h-8zM20 35h1v1h-1zM24 35h1v1h-1zM29 35h1v1h-1zM31 35h2v1h-2zM34 35h1v1h-1zM40 35h1v1h-1zM43 35h2v1h-2zM1 36h1v1h-1zM6 36h1v1h-1zM10 36h1v1h-1zM15 36h1v1h-1zM17 36h2v1h-2zM20 36h7v1h-7zM28 36h2v1h-2zM33 36h8v1h-8zM44 36h1v1h-1zM10 37h1v1h-1zM12 37h2v1h-2zM15 37h4v1h-4zM20 37h1v1h-1zM24 37h3v1h-3zM28 37h1v1h-1zM33 37h4v1h-4zM40 37h4v1h-4zM0 38h7v1h-7zM8 38h2v1h-2zM12 38h1v1h-1zM15 38h2v1h-2zM18 38h3v1h-3zM22 38h1v1h-1zM24 38h2v1h-2zM29 38h1v1h-1zM31 38h1v1h-1zM33 38h1v1h-1zM36 38h1v1h-1zM38 38h1v1h-1zM40 38h3v1h-3zM44 38h1v1h-1zM0 39h1v1h-1zM6 39h1v1h-1zM8 39h3v1h-3zM12 39h1v1h-1zM15 39h2v1h-2zM18 39h3v1h-3zM24 39h1v1h-1zM26 39h1v1h-1zM30 39h1v1h-1zM34 39h1v1h-1zM36 39h1v1h-1zM40 39h2v1h-2zM0 40h1v1h-1zM2 40h3v1h-3zM6 40h1v1h-1zM8 40h1v1h-1zM10 40h3v1h-3zM15 40h1v1h-1zM18 40h1v1h-1zM20 40h5v1h-5zM26 40h1v1h-1zM29 40h1v1h-1zM33 40h1v1h-1zM35 40h6v1h-6zM43 40h2v1h-2zM0 41h1v1h-1zM2 41h3v1h-3zM6 41h1v1h-1zM8 41h2v1h-2zM11 41h2v1h-2zM18 41h1v1h-1zM20 41h3v1h-3zM24 41h2v1h-2zM27 41h1v1h-1zM29 41h1v1h-1zM33 41h1v1h-1zM36 41h1v1h-1zM39 41h1v1h-1zM42 41h1v1h-1zM44 41h1v1h-1zM0 42h1v1h-1zM2 42h3v1h-3zM6 42h1v1h-1zM8 42h2v1h-2zM11 42h3v1h-3zM17 42h3v1h-3zM24 42h1v1h-1zM26 42h2v1h-2zM30 42h1v1h-1zM33 42h2v1h-2zM37 42h3v1h-3zM41 42h2v1h-2zM44 42h1v1h-1zM0 43h1v1h-1zM6 43h1v1h-1zM12 43h2v1h-2zM16 43h5v1h-5zM22 43h3v1h-3zM26 43h2v1h-2zM31 43h4v1h-4zM36 43h2v1h-2zM39 43h4v1h-4zM0 44h7v1h-7zM8 44h3v1h-3zM13 44h2v1h-2zM16 44h1v1h-1zM19 44h3v1h-3zM23 44h1v1h-1zM27 44h5v1h-5zM33 44h3v1h-3zM37 44h1v1h-1zM39 44h2v1h-2z"/></svg>
<svg class="ic" style="left:1611px;top:381px" viewBox="0 0 22 22" fill="none" stroke="#a3a8ad" stroke-width="1.300" stroke-linejoin="round"><path d="M14 3.700H4.500a1 1 0 0 0-1 1v13a1 1 0 0 0 1 1h13.500a1 1 0 0 0 1-1V10"/><path d="M8 14.600l.9-3 9-7.600 1.800 2.100-9 7.600z" /></svg>
<svg class="ic" style="left:1660px;top:381px" viewBox="0 0 22 22" fill="none" stroke="#a3a8ad" stroke-width="1.300" stroke-linejoin="round"><path d="M2.300 5.500h17.400"/><path d="M7.500 5.300V3.200a.8.800 0 0 1 .8-.8h5.400a.8.800 0 0 1 .8.800v2.100"/><path d="M4.300 5.700v12a1.600 1.600 0 0 0 1.600 1.600h10.200a1.600 1.600 0 0 0 1.600-1.600v-12"/><path d="M9 8.300v7M13 8.300v7"/></svg>
<div class="hl" style="top:597px"></div>
<div class="cb" style="left:35px;top:529px"></div>
<div class="c" style="left:94.5px;top:536px">1777</div>
<svg class="ph" style="top:503px;background:#c9a98a" viewBox="0 0 60 60">
<defs>
<filter id="b1" x="-30%" y="-30%" width="160%" height="160%"><feGaussianBlur stdDeviation="2.2"/></filter>
<filter id="b2" x="-30%" y="-30%" width="160%" height="160%"><feGaussianBlur stdDeviation="1.1"/></filter>
<filter id="b3" x="-30%" y="-30%" width="160%" height="160%"><feGaussianBlur stdDeviation="0.55"/></filter>
<radialGradient id="hd1" cx="50%" cy="30%" r="75%"><stop offset="0" stop-color="#dc8a50"/><stop offset=".5" stop-color="#e6aa74"/><stop offset="1" stop-color="#f0d4b4"/></radialGradient>
<clipPath id="dc"><rect width="60" height="60"/></clipPath>
</defs>
<g clip-path="url(#dc)">
<rect width="60" height="60" fill="#b4946f"/>
<g filter="url(#b1)">
<rect x="-4" y="-4" width="48" height="10" fill="#3b2d20"/>
<rect x="-4" y="4" width="10" height="14" fill="#6b5a42"/>
<rect x="38" y="-6" width="28" height="24" fill="#4f7f48"/>
<circle cx="56" cy="5" r="5" fill="#7aa870"/>
<rect x="50" y="18" width="14" height="30" fill="#a57f56"/>
<rect x="-4" y="18" width="10" height="32" fill="#dccbb2"/>
<rect x="-4" y="46" width="14" height="18" fill="#efe4d6"/>
<rect x="50" y="46" width="14" height="18" fill="#e6d6c0"/>
</g>
<g filter="url(#b2)">
<path d="M4.500 2.500l10 4.500 5 8-11.500 9.500z" fill="#dc9a62"/>
<path d="M47 .5l5.500 9 .5 14.500-15-9.500z" fill="#d48e56"/>
<ellipse cx="28.500" cy="31" rx="25.500" ry="24.500" fill="url(#hd1)"/>
<ellipse cx="29" cy="15" rx="13" ry="8" fill="#d8864a"/>
<ellipse cx="13" cy="39" rx="10" ry="9.500" fill="#f6e8d8"/>
<ellipse cx="42" cy="39" rx="10.500" ry="9.500" fill="#f2dcc2"/>
<ellipse cx="26.500" cy="42" rx="12" ry="11" fill="#f8f2ec"/>
<ellipse cx="30" cy="55" rx="19" ry="7" fill="#ecd6ba"/>
<ellipse cx="20.500" cy="23.200" rx="2.800" ry="1.800" fill="#f7e8d4"/>
<ellipse cx="33.500" cy="22.200" rx="2.800" ry="1.800" fill="#f7e8d4"/>
<path d="M6 49q2 8 3 13h48q-1.500-8-5.500-12-6 6-16 7-15 2-29.500-8z" fill="#b25fc0"/>
</g>
<g filter="url(#b3)">
<path d="M4 2.500l10.500 4.500 5 8.500-12 9z" fill="#dc9a62"/><path d="M47 0l5.500 9 .5 15-15.500-10z" fill="#d48e56"/><path d="M7.500 8l5.500 3.500 2 5.500-6 4.500z" fill="#a88468"/>
<path d="M9 12l3 2 1 3-3.500 2.500z" fill="#7a5c48"/>
<path d="M46.500 5l3 6.500-.5 8-7.500-5.500z" fill="#94684a"/>
<path d="M46.500 8l2 4.500-.5 5-4-3z" fill="#5c3c2a"/>
<ellipse cx="18.500" cy="27.400" rx="2.700" ry="1.500" fill="#4a3026" transform="rotate(12 18.500 27.400)"/>
<ellipse cx="36.200" cy="26.500" rx="3" ry="1.700" fill="#4a2c22" transform="rotate(-8 36.200 26.500)"/>
<ellipse cx="26" cy="37.300" rx="4.300" ry="3.400" fill="#17121a"/>
<path d="M19 43.400q6.500-3 13 .2" stroke="#4a3430" stroke-width="1.300" fill="none"/>
<path d="M18 45.500q0-2.500 6.500-2.500t6.500 2.500q0 7.500-6.500 7.500t-6.500-7.500z" fill="#f39ab2"/>
<circle cx="12" cy="54.500" r="2.400" fill="#f2c27a"/><circle cx="41" cy="57" r="2.300" fill="#f0a860"/><circle cx="48.500" cy="55" r="2" fill="#f2b470"/><circle cx="27" cy="58.500" r="1.600" fill="#f0a860"/><circle cx="19" cy="58" r="1.500" fill="#f4cc90"/>
</g></g></svg>
<div class="info" style="top:492px">分销商名称：kbqhs的分销商<br>用户名：18060213618<br>姓名： 22<br>联系电话：18060213618</div>
<div class="c" style="left:638.5px;top:536px"><i>0</i> 位</div>
<div class="c" style="left:720px;top:536px"><i>0</i> 位</div>
<div class="c" style="left:802px;top:536px"><i>0</i> 位</div>
<div class="c dt" style="left:915px;top:536px">2020/9/29 14:46:30</div>
<div class="c dt" style="left:1062.8px;top:536px">2020/9/29 14:44:38</div>
<div class="c red" style="left:1171.3px;top:536px">开通中</div>
<div class="c" style="left:1260.3px;top:536px"><span class="y">¥</span>0.00 元</div>
<div class="c teal" style="left:1351.9px;top:536px"><span class="y">¥</span>0.00</div>
<div class="c red" style="left:1437.2px;top:536px"><span class="y">¥</span>0.00</div>
<svg class="qr" style="top:503px" viewBox="0 0 45 45" shape-rendering="auto"><rect width="45" height="45" fill="#fff"/><path fill="#000" d="M0 0h7v1h-7zM8 0h1v1h-1zM14 0h3v1h-3zM20 0h1v1h-1zM22 0h1v1h-1zM24 0h1v1h-1zM28 0h3v1h-3zM34 0h2v1h-2zM38 0h7v1h-7zM0 1h1v1h-1zM6 1h1v1h-1zM9 1h1v1h-1zM17 1h1v1h-1zM20 1h2v1h-2zM24 1h2v1h-2zM28 1h2v1h-2zM31 1h6v1h-6zM38 1h1v1h-1zM44 1h1v1h-1zM0 2h1v1h-1zM2 2h3v1h-3zM6 2h1v1h-1zM8 2h1v1h-1zM11 2h3v1h-3zM15 2h1v1h-1zM19 2h4v1h-4zM29 2h1v1h-1zM31 2h1v1h-1zM35 2h2v1h-2zM38 2h1v1h-1zM40 2h3v1h-3zM44 2h1v1h-1zM0 3h1v1h-1zM2 3h3v1h-3zM6 3h1v1h-1zM10 3h1v1h-1zM12 3h1v1h-1zM16 3h1v1h-1zM20 3h2v1h-2zM27 3h1v1h-1zM29 3h1v1h-1zM32 3h4v1h-4zM38 3h1v1h-1zM40 3h3v1h-3zM44 3h1v1h-1zM0 4h1v1h-1zM2 4h3v1h-3zM6 4h1v1h-1zM8 4h1v1h-1zM11 4h2v1h-2zM18 4h7v1h-7zM27 4h2v1h-2zM36 4h1v1h-1zM38 4h1v1h-1zM40 4h3v1h-3zM44 4h1v1h-1zM0 5h1v1h-1zM6 5h1v1h-1zM9 5h1v1h-1zM12 5h1v1h-1zM14 5h2v1h-2zM17 5h1v1h-1zM19 5h2v1h-2zM24 5h2v1h-2zM27 5h1v1h-1zM29 5h3v1h-3zM35 5h2v1h-2zM38 5h1v1h-1zM44 5h1v1h-1zM0 6h7v1h-7zM8 6h1v1h-1zM10 6h1v1h-1zM12 6h1v1h-1zM14 6h1v1h-1zM16 6h1v1h-1zM18 6h1v1h-1zM20 6h1v1h-1zM22 6h1v1h-1zM24 6h1v1h-1zM26 6h1v1h-1zM28 6h1v1h-1zM30 6h1v1h-1zM32 6h1v1h-1zM34 6h1v1h-1zM36 6h1v1h-1zM38 6h7v1h-7zM8 7h1v1h-1zM12 7h1v1h-1zM17 7h1v1h-1zM20 7h1v1h-1zM24 7h3v1h-3zM28 7h2v1h-2zM31 7h2v1h-2zM36 7h1v1h-1zM1 8h1v1h-1zM3 8h2v1h-2zM6 8h2v1h-2zM9 8h2v1h-2zM20 8h6v1h-6zM29 8h1v1h-1zM39 8h2v1h-2zM44 8h1v1h-1zM0 9h2v1h-2zM3 9h3v1h-3zM7 9h1v1h-1zM9 9h2v1h-2zM13 9h2v1h-2zM17 9h1v1h-1zM22 9h3v1h-3zM27 9h1v1h-1zM29 9h2v1h-2zM32 9h1v1h-1zM34 9h2v1h-2zM41 9h2v1h-2zM1 10h1v1h-1zM4 10h3v1h-3zM8 10h1v1h-1zM14 10h4v1h-4zM23 10h1v1h-1zM26 10h1v1h-1zM28 10h1v1h-1zM30 10h3v1h-3zM34 10h2v1h-2zM38 10h1v1h-1zM41 10h1v1h-1zM0 11h1v1h-1zM2 11h2v1h-2zM8 11h1v1h-1zM11 11h2v1h-2zM15 11h2v1h-2zM21 11h1v1h-1zM24 11h3v1h-3zM28 11h1v1h-1zM30 11h1v1h-1zM33 11h4v1h-4zM38 11h2v1h-2zM42 11h2v1h-2zM0 12h2v1h-2zM4 12h3v1h-3zM9 12h1v1h-1zM13 12h4v1h-4zM19 12h2v1h-2zM22 12h3v1h-3zM26 12h1v1h-1zM29 12h1v1h-1zM35 12h1v1h-1zM37 12h3v1h-3zM43 12h1v1h-1zM4 13h1v1h-1zM7 13h1v1h-1zM10 13h7v1h-7zM18 13h1v1h-1zM20 13h1v1h-1zM22 13h1v1h-1zM26 13h2v1h-2zM29 13h3v1h-3zM34 13h1v1h-1zM37 13h1v1h-1zM39 13h5v1h-5zM0 14h1v1h-1zM2 14h1v1h-1zM4 14h5v1h-5zM10 14h1v1h-1zM15 14h1v1h-1zM24 14h3v1h-3zM29 14h2v1h-2zM32 14h1v1h-1zM35 14h2v1h-2zM40 14h4v1h-4zM1 15h3v1h-3zM7 15h2v1h-2zM10 15h5v1h-5zM20 15h1v1h-1zM29 15h1v1h-1zM32 15h4v1h-4zM37 15h2v1h-2zM41 15h3v1h-3zM0 16h3v1h-3zM6 16h2v1h-2zM11 16h6v1h-6zM20 16h3v1h-3zM26 16h1v1h-1zM28 16h1v1h-1zM31 16h3v1h-3zM35 16h4v1h-4zM42 16h2v1h-2zM0 17h2v1h-2zM3 17h3v1h-3zM11 17h1v1h-1zM14 17h2v1h-2zM18 17h2v1h-2zM24 17h3v1h-3zM29 17h2v1h-2zM32 17h4v1h-4zM37 17h2v1h-2zM43 17h1v1h-1zM3 18h2v1h-2zM6 18h3v1h-3zM11 18h2v1h-2zM14 18h2v1h-2zM17 18h1v1h-1zM19 18h2v1h-2zM23 18h2v1h-2zM27 18h1v1h-1zM33 18h4v1h-4zM41 18h2v1h-2zM44 18h1v1h-1zM0 19h1v1h-1zM7 19h1v1h-1zM10 19h1v1h-1zM14 19h2v1h-2zM19 19h3v1h-3zM24 19h1v1h-1zM26 19h1v1h-1zM28 19h1v1h-1zM32 19h4v1h-4zM39 19h1v1h-1zM42 19h1v1h-1zM44 19h1v1h-1zM2 20h8v1h-8zM11 20h1v1h-1zM17 20h1v1h-1zM19 20h6v1h-6zM26 20h2v1h-2zM29 20h1v1h-1zM32 20h1v1h-1zM35 20h6v1h-6zM44 20h1v1h-1zM0 21h3v1h-3zM4 21h1v1h-1zM8 21h1v1h-1zM15 21h2v1h-2zM19 21h2v1h-2zM24 21h2v1h-2zM27 21h1v1h-1zM30 21h1v1h-1zM36 21h1v1h-1zM40 21h1v1h-1zM42 21h3v1h-3zM0 22h1v1h-1zM2 22h1v1h-1zM4 22h1v1h-1zM6 22h1v1h-1zM8 22h1v1h-1zM11 22h3v1h-3zM15 22h1v1h-1zM18 22h3v1h-3zM22 22h1v1h-1zM24 22h1v1h-1zM27 22h3v1h-3zM31 22h1v1h-1zM34 22h1v1h-1zM36 22h1v1h-1zM38 22h1v1h-1zM40 22h4v1h-4zM2 23h1v1h-1zM4 23h1v1h-1zM8 23h1v1h-1zM10 23h1v1h-1zM12 23h1v1h-1zM15 23h1v1h-1zM17 23h2v1h-2zM20 23h1v1h-1zM24 23h1v1h-1zM28 23h1v1h-1zM32 23h5v1h-5zM40 23h1v1h-1zM42 23h1v1h-1zM44 23h1v1h-1zM1 24h2v1h-2zM4 24h6v1h-6zM13 24h2v1h-2zM16 24h1v1h-1zM18 24h1v1h-1zM20 24h7v1h-7zM28 24h1v1h-1zM30 24h1v1h-1zM34 24h8v1h-8zM44 24h1v1h-1zM2 25h1v1h-1zM9 25h2v1h-2zM12 25h2v1h-2zM15 25h1v1h-1zM17 25h2v1h-2zM20 25h1v1h-1zM24 25h1v1h-1zM26 25h1v1h-1zM32 25h5v1h-5zM40 25h1v1h-1zM42 25h1v1h-1zM1 26h2v1h-2zM4 26h1v1h-1zM6 26h3v1h-3zM10 26h1v1h-1zM12 26h1v1h-1zM14 26h3v1h-3zM19 26h6v1h-6zM27 26h1v1h-1zM30 26h1v1h-1zM36 26h1v1h-1zM39 26h1v1h-1zM41 26h3v1h-3zM0 27h2v1h-2zM3 27h3v1h-3zM8 27h1v1h-1zM15 27h1v1h-1zM17 27h1v1h-1zM19 27h1v1h-1zM21 27h1v1h-1zM23 27h1v1h-1zM25 27h1v1h-1zM28 27h1v1h-1zM37 27h1v1h-1zM42 27h1v1h-1zM44 27h1v1h-1zM0 28h5v1h-5zM6 28h1v1h-1zM10 28h2v1h-2zM13 28h1v1h-1zM16 28h3v1h-3zM20 28h2v1h-2zM24 28h1v1h-1zM26 28h3v1h-3zM30 28h4v1h-4zM38 28h5v1h-5zM2 29h3v1h-3zM7 29h7v1h-7zM19 29h1v1h-1zM24 29h2v1h-2zM27 29h3v1h-3zM31 29h2v1h-2zM36 29h6v1h-6zM44 29h1v1h-1zM3 30h4v1h-4zM11 30h2v1h-2zM14 30h2v1h-2zM18 30h8v1h-8zM27 30h5v1h-5zM33 30h1v1h-1zM35 30h3v1h-3zM39 30h2v1h-2zM42 30h1v1h-1zM2 31h1v1h-1zM4 31h1v1h-1zM8 31h3v1h-3zM13 31h1v1h-1zM16 31h1v1h-1zM18 31h1v1h-1zM21 31h1v1h-1zM28 31h4v1h-4zM33 31h4v1h-4zM38 31h1v1h-1zM41 31h2v1h-2zM0 32h1v1h-1zM4 32h3v1h-3zM11 32h2v1h-2zM15 32h2v1h-2zM18 32h1v1h-1zM22 32h6v1h-6zM29 32h1v1h-1zM31 32h1v1h-1zM34 32h3v1h-3zM38 32h4v1h-4zM43 32h1v1h-1zM0 33h1v1h-1zM3 33h1v1h-1zM5 33h1v1h-1zM9 33h2v1h-2zM12 33h1v1h-1zM14 33h1v1h-1zM16 33h1v1h-1zM21 33h2v1h-2zM26 33h1v1h-1zM31 33h1v1h-1zM33 33h6v1h-6zM42 33h2v1h-2zM2 34h2v1h-2zM5 34h2v1h-2zM9 34h2v1h-2zM13 34h1v1h-1zM15 34h2v1h-2zM18 34h1v1h-1zM20 34h6v1h-6zM28 34h1v1h-1zM32 34h2v1h-2zM36 34h2v1h-2zM41 34h2v1h-2zM0 35h1v1h-1zM5 35h1v1h-1zM8 35h1v1h-1zM11 35h2v1h-2zM15 35h2v1h-2zM18 35h4v1h-4zM24 35h1v1h-1zM27 35h3v1h-3zM34 35h4v1h-4zM39 35h2v1h-2zM42 35h1v1h-1zM1 36h3v1h-3zM6 36h4v1h-4zM12 36h1v1h-1zM14 36h1v1h-1zM17 36h2v1h-2zM20 36h8v1h-8zM29 36h1v1h-1zM31 36h1v1h-1zM36 36h7v1h-7zM12 37h3v1h-3zM17 37h2v1h-2zM20 37h1v1h-1zM24 37h2v1h-2zM30 37h2v1h-2zM33 37h1v1h-1zM35 37h2v1h-2zM40 37h1v1h-1zM42 37h3v1h-3zM0 38h7v1h-7zM8 38h1v1h-1zM10 38h5v1h-5zM20 38h1v1h-1zM22 38h1v1h-1zM24 38h5v1h-5zM30 38h3v1h-3zM34 38h3v1h-3zM38 38h1v1h-1zM40 38h1v1h-1zM42 38h3v1h-3zM0 39h1v1h-1zM6 39h1v1h-1zM8 39h3v1h-3zM13 39h1v1h-1zM15 39h1v1h-1zM17 39h1v1h-1zM20 39h1v1h-1zM24 39h3v1h-3zM31 39h4v1h-4zM36 39h1v1h-1zM40 39h2v1h-2zM44 39h1v1h-1zM0 40h1v1h-1zM2 40h3v1h-3zM6 40h1v1h-1zM8 40h3v1h-3zM13 40h3v1h-3zM17 40h8v1h-8zM26 40h2v1h-2zM31 40h2v1h-2zM34 40h1v1h-1zM36 40h5v1h-5zM42 40h1v1h-1zM0 41h1v1h-1zM2 41h3v1h-3zM6 41h1v1h-1zM8 41h2v1h-2zM11 41h2v1h-2zM14 41h2v1h-2zM17 41h1v1h-1zM19 41h5v1h-5zM25 41h1v1h-1zM28 41h2v1h-2zM31 41h4v1h-4zM36 41h4v1h-4zM42 41h3v1h-3zM0 42h1v1h-1zM2 42h3v1h-3zM6 42h1v1h-1zM11 42h2v1h-2zM17 42h3v1h-3zM24 42h2v1h-2zM29 42h1v1h-1zM31 42h1v1h-1zM33 42h1v1h-1zM39 42h2v1h-2zM42 42h1v1h-1zM44 42h1v1h-1zM0 43h1v1h-1zM6 43h1v1h-1zM8 43h2v1h-2zM11 43h1v1h-1zM13 43h1v1h-1zM16 43h2v1h-2zM21 43h2v1h-2zM24 43h7v1h-7zM32 43h1v1h-1zM34 43h2v1h-2zM38 43h2v1h-2zM42 43h3v1h-3zM0 44h7v1h-7zM8 44h2v1h-2zM12 44h2v1h-2zM15 44h2v1h-2zM18 44h3v1h-3zM28 44h2v1h-2zM31 44h4v1h-4zM36 44h1v1h-1zM38 44h4v1h-4zM43 44h1v1h-1z"/></svg>
<svg class="ic" style="left:1611px;top:526px" viewBox="0 0 22 22" fill="none" stroke="#a3a8ad" stroke-width="1.300" stroke-linejoin="round"><path d="M14 3.700H4.500a1 1 0 0 0-1 1v13a1 1 0 0 0 1 1h13.500a1 1 0 0 0 1-1V10"/><path d="M8 14.600l.9-3 9-7.600 1.800 2.100-9 7.600z" /></svg>
<svg class="ic" style="left:1660px;top:526px" viewBox="0 0 22 22" fill="none" stroke="#a3a8ad" stroke-width="1.300" stroke-linejoin="round"><path d="M2.300 5.500h17.400"/><path d="M7.500 5.300V3.200a.8.800 0 0 1 .8-.8h5.400a.8.800 0 0 1 .8.800v2.100"/><path d="M4.300 5.700v12a1.600 1.600 0 0 0 1.600 1.600h10.200a1.600 1.600 0 0 0 1.600-1.600v-12"/><path d="M9 8.300v7M13 8.300v7"/></svg>
<div class="hl" style="top:764px"></div>
<div class="cb" style="left:35px;top:674px"></div>
<div class="c" style="left:94.5px;top:681px">2400</div>
<div class="ph" style="top:648px"><svg style="position:absolute;left:24px;top:22px" width="13" height="15" viewBox="0 0 13 15" fill="none" stroke="#cdcdcd" stroke-width="1"><path d="M3 3.8L8.600 1l.8 3"/><path d="M2.200 4.200L1 5.200v7.200l2 1"/><rect x="3" y="4.500" width="8.500" height="9.500" rx=".8"/><path d="M4.200 12.800l2.600-5 1.500 2.400 1.100-1.400 1.600 4z" fill="#cacaca" stroke="none"/></svg></div>
<div class="info" style="top:615px">分销商名称：v197174<br>用户名：v197174<br>姓名：<br>联系电话：<br>市级代理:A1<br>县级代理:A2</div>
<div class="c" style="left:638.5px;top:681px"><i>0</i> 位</div>
<div class="c" style="left:720px;top:681px"><i>0</i> 位</div>
<div class="c" style="left:802px;top:681px"><i>0</i> 位</div>
<div class="c dt" style="left:915px;top:681px">2020/9/29 10:09:18</div>
<div class="c dt" style="left:1062.8px;top:681px">2020/9/29 16:22:11</div>
<div class="c teal" style="left:1171.3px;top:681px">已开通</div>
<div class="c" style="left:1260.3px;top:681px"><span class="y">¥</span>0.00 元</div>
<div class="c teal" style="left:1351.9px;top:681px"><span class="y">¥</span>0.00</div>
<div class="c red" style="left:1437.2px;top:681px"><span class="y">¥</span>0.00</div>
<svg class="qr" style="top:648px" viewBox="0 0 45 45" shape-rendering="auto"><rect width="45" height="45" fill="#fff"/><path fill="#000" d="M0 0h7v1h-7zM8 0h1v1h-1zM11 0h3v1h-3zM15 0h4v1h-4zM20 0h2v1h-2zM24 0h1v1h-1zM28 0h2v1h-2zM33 0h4v1h-4zM38 0h7v1h-7zM0 1h1v1h-1zM6 1h1v1h-1zM8 1h1v1h-1zM14 1h1v1h-1zM17 1h1v1h-1zM19 1h1v1h-1zM21 1h3v1h-3zM29 1h2v1h-2zM33 1h3v1h-3zM38 1h1v1h-1zM44 1h1v1h-1zM0 2h1v1h-1zM2 2h3v1h-3zM6 2h1v1h-1zM8 2h2v1h-2zM11 2h2v1h-2zM15 2h3v1h-3zM19 2h1v1h-1zM22 2h2v1h-2zM25 2h1v1h-1zM27 2h1v1h-1zM29 2h2v1h-2zM38 2h1v1h-1zM40 2h3v1h-3zM44 2h1v1h-1zM0 3h1v1h-1zM2 3h3v1h-3zM6 3h1v1h-1zM13 3h3v1h-3zM20 3h2v1h-2zM28 3h2v1h-2zM32 3h1v1h-1zM34 3h1v1h-1zM36 3h1v1h-1zM38 3h1v1h-1zM40 3h3v1h-3zM44 3h1v1h-1zM0 4h1v1h-1zM2 4h3v1h-3zM6 4h1v1h-1zM8 4h3v1h-3zM12 4h3v1h-3zM16 4h1v1h-1zM18 4h1v1h-1zM20 4h6v1h-6zM27 4h1v1h-1zM35 4h2v1h-2zM38 4h1v1h-1zM40 4h3v1h-3zM44 4h1v1h-1zM0 5h1v1h-1zM6 5h1v1h-1zM8 5h2v1h-2zM11 5h3v1h-3zM18 5h1v1h-1zM20 5h1v1h-1zM24 5h1v1h-1zM29 5h1v1h-1zM34 5h3v1h-3zM38 5h1v1h-1zM44 5h1v1h-1zM0 6h7v1h-7zM8 6h1v1h-1zM10 6h1v1h-1zM12 6h1v1h-1zM14 6h1v1h-1zM16 6h1v1h-1zM18 6h1v1h-1zM20 6h1v1h-1zM22 6h1v1h-1zM24 6h1v1h-1zM26 6h1v1h-1zM28 6h1v1h-1zM30 6h1v1h-1zM32 6h1v1h-1zM34 6h1v1h-1zM36 6h1v1h-1zM38 6h7v1h-7zM10 7h1v1h-1zM13 7h1v1h-1zM16 7h2v1h-2zM20 7h1v1h-1zM24 7h1v1h-1zM29 7h1v1h-1zM31 7h1v1h-1zM34 7h1v1h-1zM0 8h3v1h-3zM6 8h4v1h-4zM12 8h1v1h-1zM14 8h1v1h-1zM16 8h2v1h-2zM19 8h6v1h-6zM26 8h1v1h-1zM32 8h1v1h-1zM35 8h1v1h-1zM37 8h5v1h-5zM4 9h1v1h-1zM7 9h1v1h-1zM10 9h1v1h-1zM12 9h1v1h-1zM17 9h1v1h-1zM19 9h1v1h-1zM23 9h1v1h-1zM26 9h3v1h-3zM30 9h1v1h-1zM33 9h1v1h-1zM35 9h1v1h-1zM38 9h4v1h-4zM43 9h1v1h-1zM0 10h2v1h-2zM5 10h2v1h-2zM8 10h1v1h-1zM10 10h2v1h-2zM15 10h1v1h-1zM17 10h2v1h-2zM20 10h1v1h-1zM23 10h1v1h-1zM26 10h1v1h-1zM29 10h1v1h-1zM31 10h2v1h-2zM35 10h3v1h-3zM39 10h2v1h-2zM42 10h3v1h-3zM1 11h1v1h-1zM4 11h1v1h-1zM7 11h2v1h-2zM10 11h1v1h-1zM13 11h1v1h-1zM15 11h2v1h-2zM18 11h1v1h-1zM22 11h3v1h-3zM26 11h4v1h-4zM33 11h2v1h-2zM41 11h1v1h-1zM43 11h2v1h-2zM0 12h2v1h-2zM4 12h1v1h-1zM6 12h1v1h-1zM10 12h6v1h-6zM17 12h5v1h-5zM23 12h1v1h-1zM25 12h2v1h-2zM28 12h1v1h-1zM34 12h1v1h-1zM36 12h2v1h-2zM40 12h1v1h-1zM42 12h2v1h-2zM1 13h1v1h-1zM3 13h1v1h-1zM7 13h3v1h-3zM12 13h1v1h-1zM16 13h1v1h-1zM20 13h2v1h-2zM23 13h2v1h-2zM29 13h1v1h-1zM31 13h6v1h-6zM38 13h1v1h-1zM40 13h5v1h-5zM1 14h3v1h-3zM5 14h2v1h-2zM8 14h2v1h-2zM12 14h1v1h-1zM16 14h2v1h-2zM19 14h3v1h-3zM26 14h2v1h-2zM29 14h2v1h-2zM34 14h1v1h-1zM37 14h1v1h-1zM40 14h2v1h-2zM43 14h1v1h-1zM1 15h1v1h-1zM3 15h2v1h-2zM8 15h1v1h-1zM12 15h1v1h-1zM14 15h1v1h-1zM19 15h3v1h-3zM23 15h2v1h-2zM26 15h1v1h-1zM28 15h1v1h-1zM30 15h1v1h-1zM34 15h1v1h-1zM37 15h2v1h-2zM41 15h4v1h-4zM0 16h1v1h-1zM4 16h7v1h-7zM12 16h1v1h-1zM15 16h1v1h-1zM22 16h1v1h-1zM24 16h1v1h-1zM26 16h1v1h-1zM29 16h1v1h-1zM32 16h2v1h-2zM36 16h5v1h-5zM2 17h1v1h-1zM4 17h1v1h-1zM9 17h1v1h-1zM11 17h1v1h-1zM14 17h4v1h-4zM20 17h2v1h-2zM24 17h2v1h-2zM28 17h3v1h-3zM34 17h4v1h-4zM42 17h3v1h-3zM2 18h1v1h-1zM4 18h1v1h-1zM6 18h2v1h-2zM10 18h4v1h-4zM15 18h1v1h-1zM17 18h1v1h-1zM19 18h1v1h-1zM22 18h4v1h-4zM28 18h1v1h-1zM30 18h2v1h-2zM33 18h2v1h-2zM36 18h2v1h-2zM40 18h2v1h-2zM44 18h1v1h-1zM0 19h2v1h-2zM8 19h4v1h-4zM15 19h2v1h-2zM19 19h1v1h-1zM21 19h1v1h-1zM23 19h2v1h-2zM26 19h5v1h-5zM33 19h4v1h-4zM39 19h3v1h-3zM0 20h3v1h-3zM4 20h6v1h-6zM11 20h1v1h-1zM13 20h1v1h-1zM17 20h8v1h-8zM26 20h6v1h-6zM34 20h8v1h-8zM43 20h2v1h-2zM3 21h2v1h-2zM8 21h1v1h-1zM11 21h1v1h-1zM13 21h3v1h-3zM20 21h1v1h-1zM24 21h1v1h-1zM30 21h1v1h-1zM34 21h1v1h-1zM36 21h1v1h-1zM40 21h4v1h-4zM3 22h2v1h-2zM6 22h1v1h-1zM8 22h2v1h-2zM12 22h1v1h-1zM14 22h1v1h-1zM17 22h4v1h-4zM22 22h1v1h-1zM24 22h3v1h-3zM29 22h6v1h-6zM36 22h1v1h-1zM38 22h1v1h-1zM40 22h1v1h-1zM44 22h1v1h-1zM3 23h2v1h-2zM8 23h1v1h-1zM12 23h3v1h-3zM17 23h4v1h-4zM24 23h1v1h-1zM26 23h2v1h-2zM30 23h2v1h-2zM36 23h1v1h-1zM40 23h1v1h-1zM42 23h3v1h-3zM0 24h1v1h-1zM2 24h7v1h-7zM10 24h1v1h-1zM15 24h10v1h-10zM26 24h1v1h-1zM29 24h2v1h-2zM36 24h5v1h-5zM42 24h2v1h-2zM3 25h1v1h-1zM8 25h1v1h-1zM10 25h1v1h-1zM13 25h1v1h-1zM18 25h5v1h-5zM27 25h2v1h-2zM31 25h1v1h-1zM33 25h5v1h-5zM41 25h1v1h-1zM5 26h4v1h-4zM12 26h2v1h-2zM15 26h4v1h-4zM20 26h1v1h-1zM22 26h1v1h-1zM24 26h1v1h-1zM26 26h1v1h-1zM30 26h3v1h-3zM36 26h1v1h-1zM39 26h3v1h-3zM43 26h2v1h-2zM0 27h2v1h-2zM5 27h1v1h-1zM7 27h1v1h-1zM9 27h2v1h-2zM12 27h4v1h-4zM17 27h7v1h-7zM28 27h2v1h-2zM31 27h2v1h-2zM34 27h2v1h-2zM39 27h1v1h-1zM42 27h1v1h-1zM0 28h1v1h-1zM3 28h1v1h-1zM6 28h2v1h-2zM9 28h1v1h-1zM11 28h1v1h-1zM13 28h1v1h-1zM16 28h4v1h-4zM23 28h2v1h-2zM26 28h3v1h-3zM31 28h8v1h-8zM40 28h1v1h-1zM42 28h2v1h-2zM1 29h2v1h-2zM4 29h2v1h-2zM10 29h2v1h-2zM17 29h3v1h-3zM22 29h2v1h-2zM25 29h1v1h-1zM28 29h2v1h-2zM31 29h2v1h-2zM34 29h2v1h-2zM38 29h1v1h-1zM40 29h2v1h-2zM2 30h1v1h-1zM6 30h1v1h-1zM8 30h1v1h-1zM10 30h4v1h-4zM17 30h3v1h-3zM21 30h1v1h-1zM24 30h1v1h-1zM30 30h1v1h-1zM32 30h1v1h-1zM34 30h1v1h-1zM36 30h1v1h-1zM39 30h1v1h-1zM43 30h2v1h-2zM4 31h1v1h-1zM7 31h2v1h-2zM11 31h1v1h-1zM13 31h2v1h-2zM16 31h3v1h-3zM20 31h1v1h-1zM22 31h2v1h-2zM26 31h2v1h-2zM29 31h1v1h-1zM31 31h2v1h-2zM34 31h3v1h-3zM38 31h1v1h-1zM40 31h1v1h-1zM43 31h1v1h-1zM3 32h1v1h-1zM6 32h1v1h-1zM8 32h4v1h-4zM16 32h8v1h-8zM25 32h3v1h-3zM29 32h2v1h-2zM32 32h1v1h-1zM35 32h2v1h-2zM40 32h3v1h-3zM1 33h5v1h-5zM9 33h3v1h-3zM14 33h2v1h-2zM17 33h1v1h-1zM19 33h1v1h-1zM23 33h1v1h-1zM25 33h2v1h-2zM32 33h3v1h-3zM36 33h1v1h-1zM40 33h1v1h-1zM42 33h2v1h-2zM3 34h1v1h-1zM6 34h1v1h-1zM8 34h1v1h-1zM10 34h1v1h-1zM12 34h1v1h-1zM14 34h2v1h-2zM18 34h1v1h-1zM21 34h1v1h-1zM27 34h2v1h-2zM30 34h3v1h-3zM34 34h1v1h-1zM36 34h1v1h-1zM38 34h1v1h-1zM41 34h1v1h-1zM43 34h2v1h-2zM0 35h1v1h-1zM2 35h3v1h-3zM10 35h4v1h-4zM16 35h1v1h-1zM19 35h1v1h-1zM21 35h2v1h-2zM24 35h3v1h-3zM29 35h2v1h-2zM32 35h1v1h-1zM34 35h3v1h-3zM41 35h1v1h-1zM43 35h1v1h-1zM0 36h2v1h-2zM4 36h1v1h-1zM6 36h1v1h-1zM8 36h2v1h-2zM11 36h1v1h-1zM15 36h1v1h-1zM20 36h6v1h-6zM29 36h1v1h-1zM31 36h1v1h-1zM33 36h1v1h-1zM35 36h7v1h-7zM14 37h3v1h-3zM20 37h1v1h-1zM24 37h2v1h-2zM27 37h1v1h-1zM32 37h1v1h-1zM34 37h3v1h-3zM40 37h5v1h-5zM0 38h7v1h-7zM8 38h4v1h-4zM13 38h1v1h-1zM15 38h2v1h-2zM18 38h1v1h-1zM20 38h1v1h-1zM22 38h1v1h-1zM24 38h2v1h-2zM27 38h1v1h-1zM29 38h1v1h-1zM31 38h1v1h-1zM33 38h2v1h-2zM36 38h1v1h-1zM38 38h1v1h-1zM40 38h5v1h-5zM0 39h1v1h-1zM6 39h1v1h-1zM12 39h2v1h-2zM16 39h1v1h-1zM19 39h2v1h-2zM24 39h3v1h-3zM28 39h1v1h-1zM32 39h1v1h-1zM34 39h1v1h-1zM36 39h1v1h-1zM40 39h3v1h-3zM44 39h1v1h-1zM0 40h1v1h-1zM2 40h3v1h-3zM6 40h1v1h-1zM13 40h1v1h-1zM15 40h1v1h-1zM17 40h2v1h-2zM20 40h5v1h-5zM28 40h1v1h-1zM30 40h2v1h-2zM34 40h11v1h-11zM0 41h1v1h-1zM2 41h3v1h-3zM6 41h1v1h-1zM8 41h1v1h-1zM10 41h10v1h-10zM23 41h1v1h-1zM27 41h2v1h-2zM31 41h5v1h-5zM38 41h1v1h-1zM41 41h2v1h-2zM0 42h1v1h-1zM2 42h3v1h-3zM6 42h1v1h-1zM9 42h3v1h-3zM13 42h1v1h-1zM16 42h8v1h-8zM25 42h1v1h-1zM27 42h1v1h-1zM29 42h1v1h-1zM31 42h2v1h-2zM34 42h1v1h-1zM37 42h1v1h-1zM40 42h3v1h-3zM0 43h1v1h-1zM6 43h1v1h-1zM10 43h2v1h-2zM13 43h1v1h-1zM18 43h2v1h-2zM24 43h2v1h-2zM29 43h2v1h-2zM33 43h1v1h-1zM35 43h1v1h-1zM37 43h1v1h-1zM39 43h3v1h-3zM44 43h1v1h-1zM0 44h7v1h-7zM8 44h2v1h-2zM11 44h1v1h-1zM13 44h1v1h-1zM16 44h1v1h-1zM23 44h1v1h-1zM26 44h1v1h-1zM30 44h1v1h-1zM32 44h5v1h-5zM39 44h3v1h-3zM44 44h1v1h-1z"/></svg>
<svg class="ic" style="left:1611px;top:671px" viewBox="0 0 22 22" fill="none" stroke="#a3a8ad" stroke-width="1.300" stroke-linejoin="round"><path d="M14 3.700H4.500a1 1 0 0 0-1 1v13a1 1 0 0 0 1 1h13.500a1 1 0 0 0 1-1V10"/><path d="M8 14.600l.9-3 9-7.600 1.800 2.100-9 7.600z" /></svg>
<svg class="ic" style="left:1660px;top:671px" viewBox="0 0 22 22" fill="none" stroke="#a3a8ad" stroke-width="1.300" stroke-linejoin="round"><path d="M2.300 5.500h17.400"/><path d="M7.500 5.300V3.200a.8.800 0 0 1 .8-.8h5.400a.8.800 0 0 1 .8.800v2.100"/><path d="M4.300 5.700v12a1.600 1.600 0 0 0 1.600 1.600h10.200a1.600 1.600 0 0 0 1.600-1.600v-12"/><path d="M9 8.300v7M13 8.300v7"/></svg>
<div class="abs" style="left:596px;top:197px;width:85px;height:84px;border:3px solid #f21cf2"></div>
</div>
<div id="bot">
<div class="cb" style="left:20px;top:22px"></div>
<div class="lb" style="left:42px;top:19px">全选</div>
<div class="rd" style="left:91px;top:23.500px"><div style="position:absolute;left:2.750px;top:2.750px;width:7px;height:7px;border-radius:50%;background:#1fb5a8"></div></div>
<div class="lb" style="left:111.7px;top:19px">删除</div>
<div class="rd" style="left:161px;top:23.500px"></div>
<div class="lb" style="left:181.7px;top:19px">通过</div>
<div class="rd" style="left:230.5px;top:23.500px"></div>
<div class="lb" style="left:251px;top:19px">未通过</div>
<div class="rd" style="left:314.7px;top:23.500px"></div>
<div class="lb" style="left:335.5px;top:19px">锁定</div>
<div class="btn" style="left:391px;top:12px;width:98px;height:32px;line-height:33px">开始执行</div>
<div class="btn" style="left:509px;top:12px;width:70px;height:32px;line-height:33px">打印</div>
<div class="lb" style="left:1341.5px;top:17px">共：82条</div>
<div class="btn" style="left:1406px;top:12px;width:50px;height:30px;line-height:29px;color:#ccc;border-color:#e4e4e4;">首页</div>
<div class="btn" style="left:1466px;top:12px;width:64px;height:30px;line-height:29px;color:#ccc;border-color:#e4e4e4;">上一页</div>
<div class="btn" style="left:1540px;top:12px;width:30px;height:30px;line-height:29px;color:#34a6ba;border-color:#34a6ba;">1</div>
<div class="btn" style="left:1576px;top:12px;width:29px;height:30px;line-height:29px;border-color:#d8d8d8;">2</div>
<div class="btn" style="left:1615px;top:12px;width:64px;height:30px;line-height:29px;border-color:#d8d8d8;">下一页</div>
<div class="btn" style="left:1689px;top:12px;width:50px;height:30px;line-height:29px;border-color:#d8d8d8;">末页</div>
</div>
<div class="abs" style="left:1910px;top:780px;width:8px;height:56px;border-radius:4px;background:#5d5f63;overflow:hidden"><div style="position:absolute;left:1px;top:25px;width:6px;height:29px;background:repeating-linear-gradient(#3fd06a 0,#3fd06a 1px,#2c7a48 1px,#2c7a48 2px)"></div></div>
<div id="status">192.168.1.10:71/manage/Agent/KS.AgentShop.aspx</div>
</body>
</html>
